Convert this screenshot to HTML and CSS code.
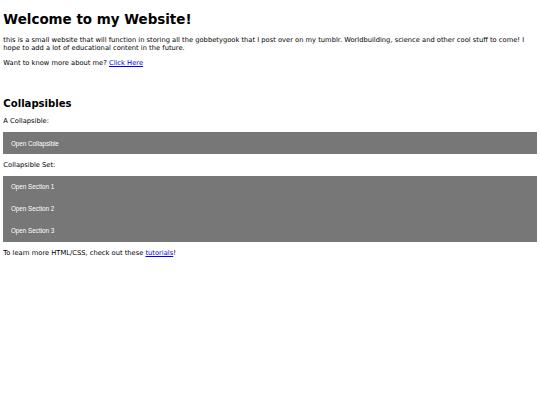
FILE: index.html
```html
<!DOCTYPE html>
<html lang="en">
<head>
<meta charset="utf-8">
<title>Welcome to my Website!</title>
<link rel="stylesheet" href="styles.css">
</head>
<body>
<h1>Welcome to my Website!</h1>
<p>this is a small website that will function in storing all the gobbetygook that I post over on my tumblr. Worldbuilding, science and other cool stuff to come! I hope to add a lot of educational content in the future.</p>
<p>Want to know more about me? <a href="#">Click Here</a></p>

<h2 class="section-title">Collapsibles</h2>
<p>A Collapsible:</p>
<button class="collapsible" type="button">Open Collapsible</button>
<div class="content"></div>
<p>Collapsible Set:</p>
<div class="set">
  <button class="collapsible" type="button">Open Section 1</button>
  <div class="content"></div>
  <button class="collapsible" type="button">Open Section 2</button>
  <div class="content"></div>
  <button class="collapsible" type="button">Open Section 3</button>
  <div class="content"></div>
</div>
<p>To learn more HTML/CSS, check out these <a href="#">tutorials</a>!</p>
</body>
</html>
```

FILE: styles.css
```css
html {
  background: #fff;
}
body {
  margin: 3.36px;
  font-family: "DejaVu Sans", Verdana, sans-serif;
  font-size: 6.72px;
  color: #000;
}
h1 {
  font-size: 13.44px;
  margin: 9px 0;
}
h2 {
  font-size: 10.08px;
  margin: 8.37px 0;
}
.section-title {
  margin-top: 31px;
}
p {
  margin: 6.72px 0;
}
a {
  color: #0000ee;
}
.collapsible {
  display: block;
  width: 100%;
  background-color: #777;
  color: #fff;
  border: none;
  outline: none;
  text-align: left;
  font-family: "Liberation Sans", Arial, sans-serif;
  font-size: 6.3px;
  padding: 7.56px;
  margin: 0;
  cursor: pointer;
}
.content {
  display: none;
  padding: 0 7.56px;
  overflow: hidden;
  background-color: #f1f1f1;
}
```
